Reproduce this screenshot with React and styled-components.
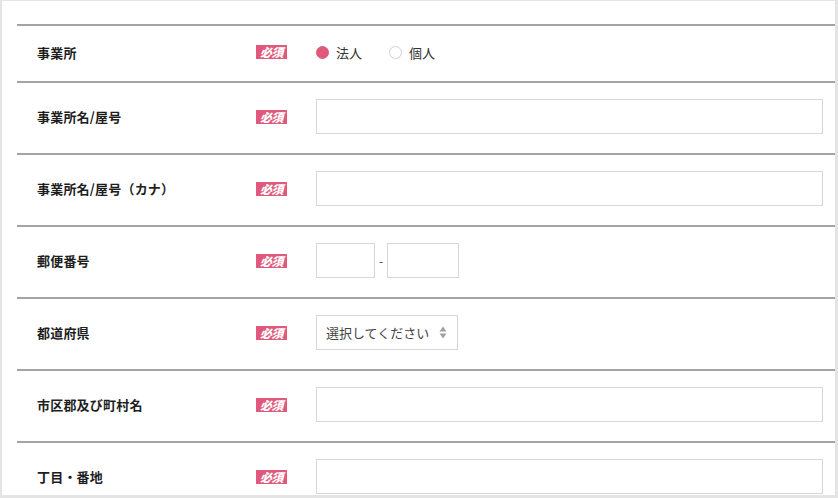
import styled, { createGlobalStyle } from "styled-components";

const GlobalStyle = createGlobalStyle`
  html, body {
    margin: 0;
    padding: 0;
    background: #e4e4e4;
  }
  body {
    font-family: "Noto Sans CJK JP", "Noto Sans", sans-serif;
    color: #222;
  }
`;

const Panel = styled.div`
  margin: 1px 3px 0 2px;
  height: 494px;
  overflow: hidden;
  background: #fff;
  padding: 23px 0 0 15px;
  box-sizing: border-box;
`;

const Row = styled.div`
  display: grid;
  grid-template-columns: 219px 60px 1fr;
  align-items: center;
  height: ${(p) => (p.$short ? "57px" : "72px")};
  box-sizing: border-box;
  border-top: 2px solid #a3a3a3;
  padding: 0 12px 3px 20px;
`;

const Label = styled.div`
  font-size: 13px;
  font-weight: 700;
  color: #1e1e1e;
  letter-spacing: 0.2px;
`;

const Badge = styled.span`
  justify-self: start;
  display: inline-block;
  width: 31px;
  height: 14px;
  line-height: 14px;
  background: #e0587b;
  color: #fff;
  font-size: 12px;
  font-weight: 900;
  font-style: italic;
  text-align: center;
  letter-spacing: -0.5px;
`;

const RadioGroup = styled.div`
  display: flex;
  align-items: center;
  gap: 27px;
`;

const RadioItem = styled.label`
  display: flex;
  align-items: center;
  gap: 7px;
  font-size: 13px;
  color: #333;
`;

const Dot = styled.span`
  width: 13px;
  height: 13px;
  border-radius: 50%;
  box-sizing: border-box;
  background: ${(p) => (p.$on ? "#e0587b" : "#fff")};
  border: 1px solid ${(p) => (p.$on ? "#e0587b" : "#cfcfcf")};
`;

const Field = styled.div`
  width: ${(p) => p.$w || "100%"};
  height: 35px;
  box-sizing: border-box;
  border: 1px solid #d6d6d6;
  background: #fff;
`;

const Postal = styled.div`
  display: flex;
  align-items: center;
  gap: 4px;
  font-size: 12px;
  color: #444;
`;

const Select = styled.div`
  width: 142px;
  height: 35px;
  box-sizing: border-box;
  border: 1px solid #d6d6d6;
  display: flex;
  align-items: center;
  justify-content: space-between;
  padding: 0 10px 0 9px;
  font-size: 13px;
  color: #444;
`;

const Arrows = styled.svg`
  width: 8px;
  height: 13px;
`;

const Control = styled.div`
  display: flex;
`;

const App = () => (
  <>
    <GlobalStyle />
    <Panel>
      <Row $short>
        <Label>事業所</Label>
        <Badge>必須</Badge>
        <RadioGroup>
          <RadioItem>
            <Dot $on />
            法人
          </RadioItem>
          <RadioItem>
            <Dot />
            個人
          </RadioItem>
        </RadioGroup>
      </Row>
      <Row>
        <Label>事業所名/屋号</Label>
        <Badge>必須</Badge>
        <Field />
      </Row>
      <Row>
        <Label>事業所名/屋号（カナ）</Label>
        <Badge>必須</Badge>
        <Field />
      </Row>
      <Row>
        <Label>郵便番号</Label>
        <Badge>必須</Badge>
        <Postal>
          <Field $w="59px" />
          -
          <Field $w="72px" />
        </Postal>
      </Row>
      <Row>
        <Label>都道府県</Label>
        <Badge>必須</Badge>
        <Control>
          <Select>
            選択してください
            <Arrows viewBox="0 0 8 13">
              <path d="M4 0.5 L7.5 5.5 L0.5 5.5 Z" fill="#a0a0a0" />
              <path d="M4 12.5 L7.5 7.5 L0.5 7.5 Z" fill="#a0a0a0" />
            </Arrows>
          </Select>
        </Control>
      </Row>
      <Row>
        <Label>市区郡及び町村名</Label>
        <Badge>必須</Badge>
        <Field />
      </Row>
      <Row>
        <Label>丁目・番地</Label>
        <Badge>必須</Badge>
        <Field />
      </Row>
    </Panel>
  </>
);

export default App;
